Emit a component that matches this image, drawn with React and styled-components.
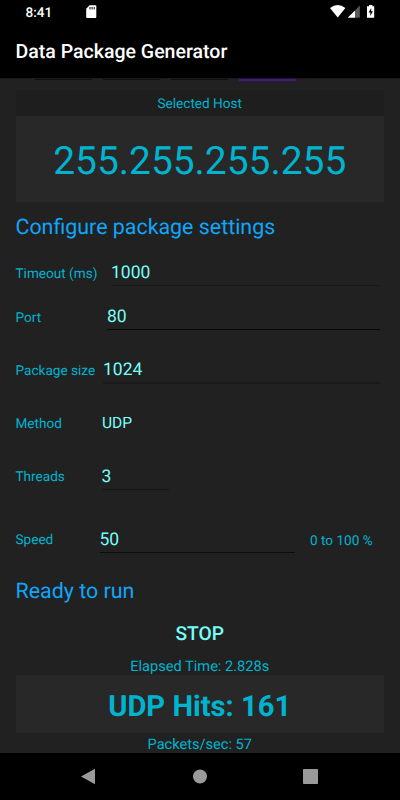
import React from "react";
import styled, { createGlobalStyle } from "styled-components";

const Global = createGlobalStyle`
  * { box-sizing: border-box; }
  html, body { margin: 0; background: #212121; }
  body {
    font-family: Roboto, "Liberation Sans", sans-serif;
    text-rendering: geometricPrecision;
  }
`;

const Screen = styled.div`
  width: 400px;
  height: 800px;
  overflow: hidden;
  display: flex;
  flex-direction: column;
  background: #212121;
  color: #00b4d0;
`;

const StatusBar = styled.header`
  height: 24px;
  flex: none;
  display: flex;
  align-items: flex-start;
  padding: 0 24px 0 25.5px;
  background: #000;
  color: #fff;
`;

const Clock = styled.time`
  width: 59.5px;
  font-size: 13.6px;
  font-weight: 500;
  line-height: 26px;
`;

const StatusIcons = styled.div`
  margin-left: auto;
  display: flex;
`;

const AppBar = styled.div`
  height: 54px;
  flex: none;
  padding-left: 15.5px;
  background: #000;
  color: #fff;
  font-size: 19.55px;
  font-weight: 500;
  line-height: 56px;
`;

const Content = styled.main`
  height: 675px;
  flex: none;
  overflow: hidden;
  padding: 0 16px 0 15.5px;
  box-shadow: inset 0 1px 0 #1a1a1a;
`;

const AddressLines = styled.div`
  display: flex;
  gap: 11px;
  height: 12px;
  padding: 1px 0 0 19.5px;
`;

const AddressLine = styled.div`
  width: 57px;
  height: ${(p) => (p.$active ? 2 : 1)}px;
  background: ${(p) => (p.$active ? "#4a148c" : "#101010")};
`;

const CardTitle = styled.div`
  height: 26px;
  background: #1e1e1e;
  text-align: center;
  font-size: 13.6px;
  line-height: 29px;
`;

const Card = styled.div`
  height: ${(p) => p.$height}px;
  background: #282828;
  text-align: center;
  font-size: ${(p) => p.$size}px;
  font-weight: ${(p) => p.$weight || 400};
  line-height: ${(p) => p.$line}px;
`;

const Heading = styled.h2`
  margin: ${(p) => p.$top}px 0 0;
  height: 28px;
  color: #0fa6fa;
  font-size: 21.4px;
  font-weight: 400;
  line-height: 30px;
`;

const Row = styled.div`
  display: flex;
  align-items: flex-start;
  height: ${(p) => p.$height}px;
`;

const Label = styled.label`
  width: ${(p) => p.$width}px;
  flex: none;
  padding-top: ${(p) => p.$drop ?? 2}px;
  font-size: 13.6px;
  line-height: 22px;
  white-space: nowrap;
`;

const Field = styled.div`
  width: ${(p) => p.$width}px;
  height: ${(p) => 24 + (p.$stroke ?? 1)}px;
  border-bottom: ${(p) => p.$stroke ?? 1}px solid ${(p) => p.$line || "#111"};
  color: #76fff8;
  font-size: 17.5px;
  line-height: 24px;
`;

const Choice = styled.div`
  color: #76fff8;
  font-size: 15.6px;
  line-height: 22px;
`;

const Hint = styled.span`
  margin-left: 15.5px;
  padding-top: 2px;
  font-size: 13.6px;
  line-height: 22px;
`;

const StopButton = styled.button`
  display: block;
  width: 100%;
  height: 47px;
  margin: 0;
  padding: 0;
  border: 0;
  background: none;
  color: #76fff8;
  text-rendering: geometricPrecision;
  font: 500 19.2px/46px Roboto, sans-serif;
`;

const Stat = styled.div`
  height: ${(p) => p.$height}px;
  text-align: center;
  font-size: 14.6px;
  line-height: ${(p) => p.$line}px;
`;

const NavBar = styled.nav`
  height: 47px;
  flex: none;
  background: #000;
`;

export default function App() {
  return (
    <>
      <Global />
      <Screen>
        <StatusBar>
          <Clock>8:41</Clock>
          <svg width="12" height="24" viewBox="0 0 12 24">
            <path fill="#fff" d="M4.5 5.2H10.3Q11.3 5.2 11.3 6.2V17Q11.3 18 10.3 18H2.2Q1.2 18 1.2 17V8.8Z" />
            <path stroke="#000" strokeWidth="1" d="M5 7v2.4M7.1 7v2.4M9.2 7v2.4" />
          </svg>
          <StatusIcons>
            <svg width="46" height="24" viewBox="330 0 46 24">
              <path fill="#fff" d="M330 8Q337.6 2.2 345.4 8L337.7 17.6Z" />
              <path fill="#fff" d="M347.6 17.8L355 10.4V17.8Z" />
              <path fill="#5a5a5a" d="M355 10.4L359.8 5.6V17.8H355Z" />
              <path fill="#fff" d="M369 5H372.4V6.2H374.2V17.8H367V6.2H369Z" />
              <path fill="#000" d="M371.2 8L368.6 12.6H370.3V16L372.9 11.2H371.2Z" />
            </svg>
          </StatusIcons>
        </StatusBar>
        <AppBar>Data Package Generator</AppBar>
        <Content>
          <AddressLines>
            <AddressLine />
            <AddressLine />
            <AddressLine />
            <AddressLine $active />
          </AddressLines>
          <CardTitle>Selected Host</CardTitle>
          <Card $height={86} $size={38.9} $line={92}>255.255.255.255</Card>
          <Heading $top={11}>Configure package settings</Heading>
          <Row $height={20} />
          <Row $height={44}>
            <Label $width={95.5}>Timeout (ms)</Label>
            <Field $width={269} $line="#191919">1000</Field>
          </Row>
          <Row $height={53}>
            <Label $width={91.5}>Port</Label>
            <Field $width={273} $line="#080808">80</Field>
          </Row>
          <Row $height={54}>
            <Label $width={87.5}>Package size</Label>
            <Field $width={277} $stroke={2} $line="#1a1a1a">1024</Field>
          </Row>
          <Row $height={53}>
            <Label $width={86.5} $drop={1}>Method</Label>
            <Choice>UDP</Choice>
          </Row>
          <Row $height={63}>
            <Label $width={86} $drop={1}>Threads</Label>
            <Field $width={67} $line="#151515">3</Field>
          </Row>
          <Row $height={49}>
            <Label $width={84} $drop={1}>Speed</Label>
            <Field $width={195} $line="#0c0c0c">50</Field>
            <Hint>0 to 100 %</Hint>
          </Row>
          <Heading $top={0}>Ready to run</Heading>
          <Row $height={5} />
          <StopButton>STOP</StopButton>
          <Stat $height={18} $line={18}>Elapsed Time: 2.828s</Stat>
          <Card $height={58} $size={29.2} $weight={700} $line={64}>UDP Hits: 161</Card>
          <Stat $height={20} $line={22}>Packets/sec: 57</Stat>
        </Content>
        <NavBar>
          <svg width="400" height="47" viewBox="0 753 400 47" fill="#9a9a9a">
            <path d="M81 776.5L95 768.7V784.3Z" />
            <circle cx="200" cy="776.5" r="7" />
            <rect x="303" y="769" width="15" height="15" rx="0.7" />
          </svg>
        </NavBar>
      </Screen>
    </>
  );
}
